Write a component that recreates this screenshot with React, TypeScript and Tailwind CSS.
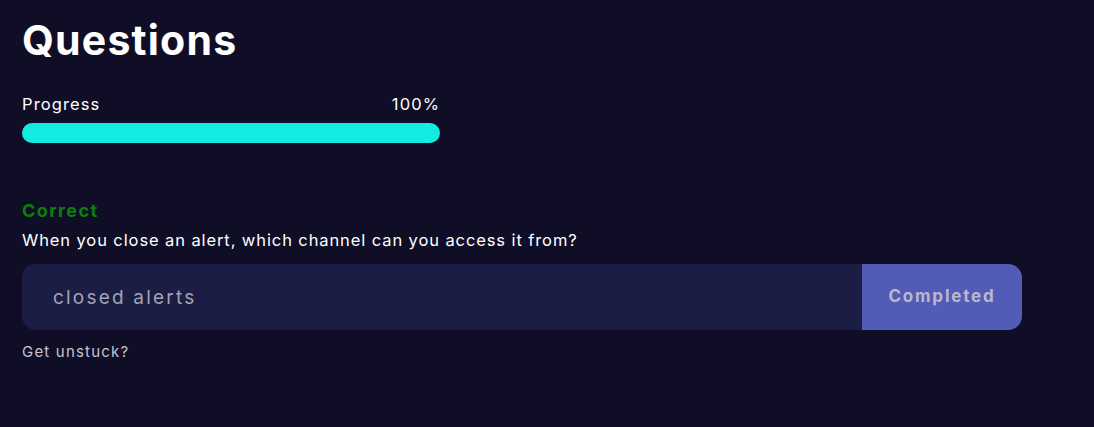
export default function App() {
  const progress = 100

  return (
    <div className="min-h-screen bg-[#100e27] px-[22px] pt-[14px] font-['Inter','Open_Sans',sans-serif] text-white">
      <h1 className="text-[41px] font-bold leading-[52px] tracking-[1.2px]">Questions</h1>

      <div className="mt-[26px] w-[418px]">
        <div className="flex items-center justify-between text-[16.5px] leading-[24px] tracking-[1.1px]">
          <span>Progress</span>
          <span>{progress}%</span>
        </div>
        <div className="mt-[7px] h-[20px] w-full rounded-full bg-[#2a2950]">
          <div className="h-full rounded-full bg-[#10ede0]" style={{ width: `${progress}%` }} />
        </div>
      </div>

      <div className="mt-[55px]">
        <p className="text-[18px] font-bold leading-[26px] tracking-[1.4px] text-[#0a800a]">Correct</p>
        <p className="mt-[4px] text-[16.5px] leading-[24px] tracking-[0.9px]">
          When you close an alert, which channel can you access it from?
        </p>

        <div className="mt-[12px] flex h-[66px] w-[1000px] overflow-hidden rounded-[14px]">
          <input
            type="text"
            readOnly
            value="closed alerts"
            className="h-full flex-1 bg-[#1c1d45] px-[31px] text-[19px] tracking-[2.2px] text-[#a3a3b5] outline-none"
          />
          <button
            type="button"
            disabled
            className="h-full w-[160px] bg-[#525bb5] text-[17px] font-bold tracking-[1.8px] text-[#b9b9cc]"
          >
            Completed
          </button>
        </div>

        <p className="mt-[12px] text-[15px] leading-[20px] tracking-[1.2px] text-[#c4c4cc]">Get unstuck?</p>
      </div>
    </div>
  )
}
